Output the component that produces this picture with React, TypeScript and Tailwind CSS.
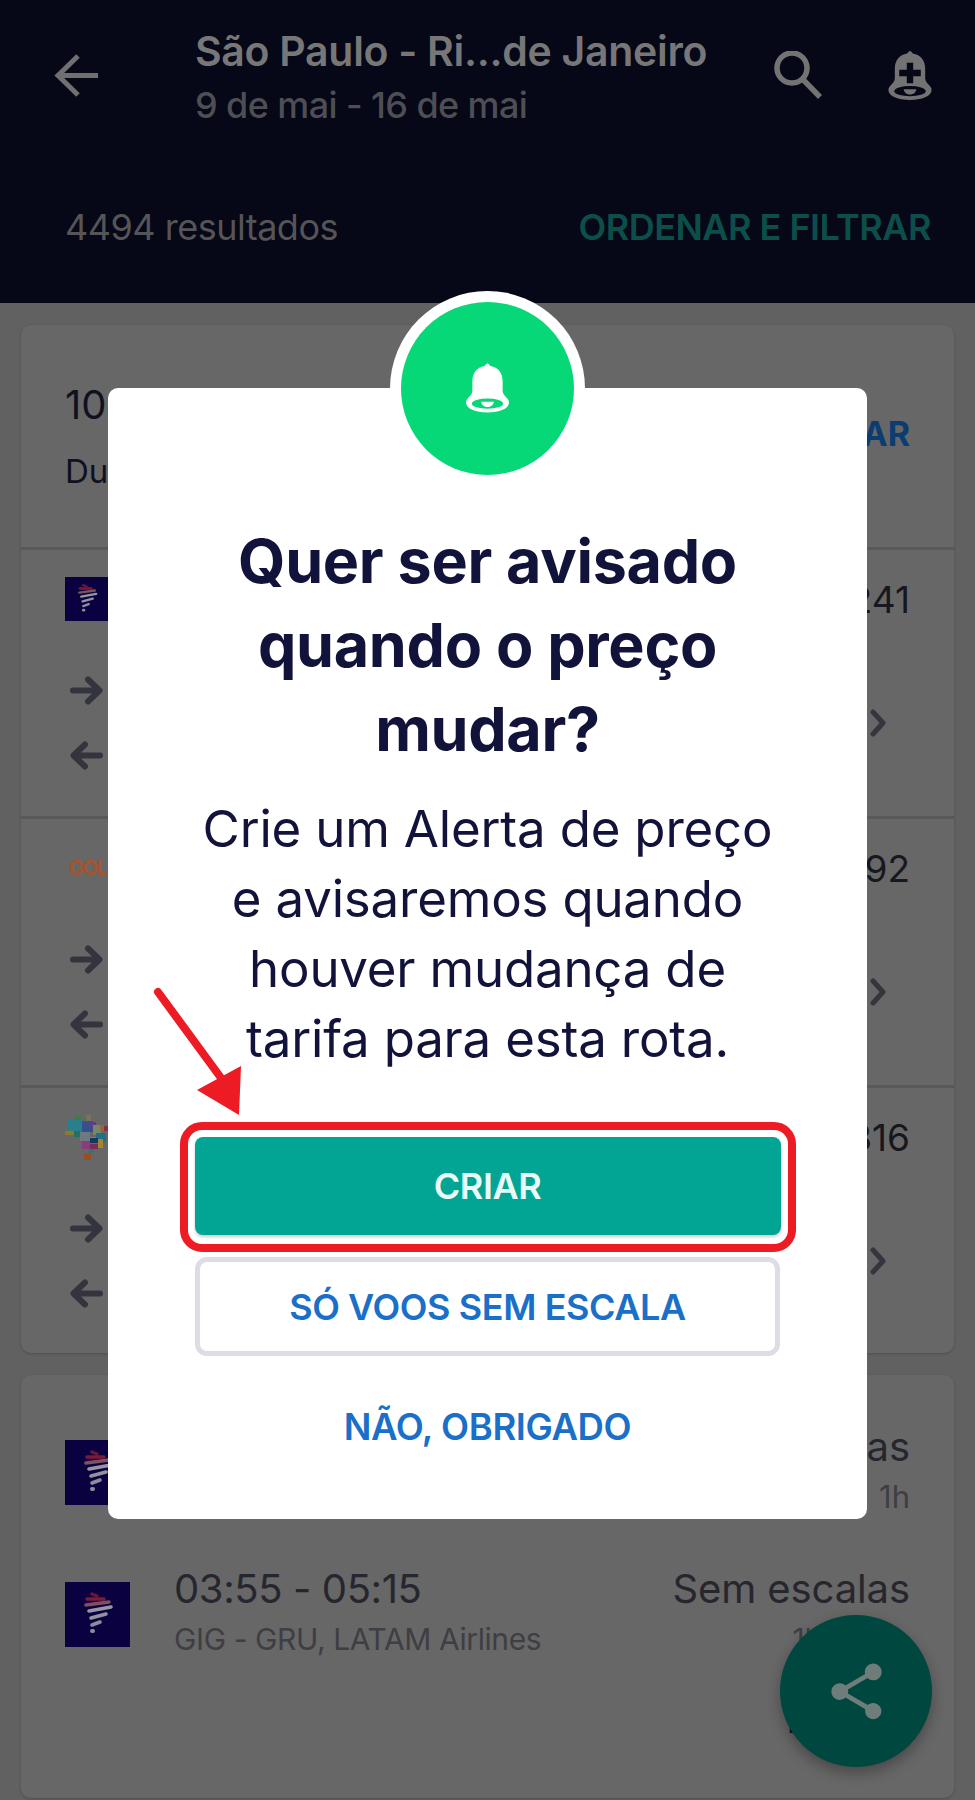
function Latam({ className }: { className: string }) {
  return (
    <svg viewBox="0 0 65 65" className={className}>
      <rect width="65" height="65" fill="#0a0240" />
      <g fill="none" strokeLinecap="round">
        <path d="M27 12 L32 14" stroke="#6e1530" strokeWidth="3.5" />
        <path d="M22 17 L39 17" stroke="#7c1a38" strokeWidth="3.5" />
        <path d="M21 23 L44 20" stroke="#80505f" strokeWidth="3.5" />
        <path d="M24 29 L46 25" stroke="#9a95a2" strokeWidth="3.5" />
        <path d="M26 36 L41 32" stroke="#96919f" strokeWidth="3.5" />
        <path d="M27 43 L35 40" stroke="#8f8b9b" strokeWidth="3.5" />
        <path d="M27 49 L28 49" stroke="#8d8a9c" strokeWidth="4" />
      </g>
    </svg>
  );
}

function Brazil() {
  const cells: [number, number, number, number, string][] = [
    [25, 16, 6, 6, "#3d7d43"],
    [36, 15, 5, 7, "#77745a"],
    [18, 20, 14, 11, "#2a7f8c"],
    [32, 21, 11, 11, "#34508e"],
    [40, 22, 6, 6, "#5c3f86"],
    [43, 25, 8, 10, "#7d8468"],
    [50, 25, 5, 6, "#8f6b3c"],
    [54, 26, 5, 5, "#8b2c4a"],
    [15, 31, 9, 4, "#8a7a2a"],
    [24, 31, 6, 6, "#256f68"],
    [30, 32, 10, 9, "#6f7a80"],
    [46, 33, 10, 9, "#1f6f88"],
    [40, 37, 6, 6, "#72808a"],
    [40, 38, 8, 5, "#10395a"],
    [48, 39, 5, 9, "#a3842f"],
    [32, 41, 8, 8, "#8a3b7e"],
    [40, 44, 8, 5, "#7d2b54"],
    [38, 49, 6, 4, "#3c6f78"],
    [34, 53, 7, 7, "#9a4f22"],
  ];
  return (
    <svg viewBox="15 15 44 45" className="w-[44px] h-[45px]">
      {cells.map(([x, y, w, h, c], i) => (
        <rect key={i} x={x} y={y} width={w} height={h} fill={c} />
      ))}
    </svg>
  );
}

function TripArrows() {
  return (
    <div className="mt-[55px] ml-[5px] flex flex-col gap-[36px]">
      <svg viewBox="0 0 33 29" className="w-[33px] h-[29px]" fill="none" stroke="#34343e" strokeWidth="6" strokeLinecap="round" strokeLinejoin="round">
        <path d="M3 14.5 H29 M18 3.5 L29.5 14.5 L18 25.5" />
      </svg>
      <svg viewBox="0 0 33 29" className="w-[33px] h-[29px]" fill="none" stroke="#34343e" strokeWidth="6" strokeLinecap="round" strokeLinejoin="round">
        <path d="M30 14.5 H4 M15 3.5 L3.5 14.5 L15 25.5" />
      </svg>
    </div>
  );
}

function Row({ logo, price, height }: { logo: React.ReactNode; price: string; height: string }) {
  return (
    <div className={`${height} border-t-[3px] border-[#595959] flex justify-between px-[44px]`}>
      <div className="pt-[27px] flex flex-col">
        <div className="h-[44px] w-[44px]">{logo}</div>
        <TripArrows />
      </div>
      <div className="pt-[30px] flex flex-col items-end">
        <div className="text-[37px] leading-[40px] text-[#17171f]">{price}</div>
        <svg viewBox="0 0 16 28" className="w-[16px] h-[28px] mt-[89px] mr-[24px]" fill="none" stroke="#35353e" strokeWidth="5" strokeLinecap="round" strokeLinejoin="round">
          <path d="M3 3 L13 14 L3 25" />
        </svg>
      </div>
    </div>
  );
}

function Bell({ color, inner, plus }: { color: string; inner: string; plus?: boolean }) {
  return (
    <svg viewBox="0 0 44 50" className="w-full h-full" fill={color}>
      <path d="M22 0 C20.6 0 20 1.6 19 2.6 C11 4 6.5 10 6.5 18 L6.5 28 C6.5 31 4 33 1.5 36 C0.5 37.2 0 38.5 0 40 C0 46 10 50 22 50 C34 50 44 46 44 40 C44 38.5 43.5 37.2 42.5 36 C40 33 37.5 31 37.5 28 L37.5 18 C37.5 10 33 4 25 2.6 C24 1.6 23.4 0 22 0 Z" />
      <ellipse cx="22" cy="41" rx="16" ry="5.2" fill={inner} />
      <path d="M15.5 39 H28.5 C28 42.5 25 44.5 22 44.5 C19 44.5 16 42.5 15.5 39 Z" />
      {plus && <path d="M22 12 V33 M11 22.5 H33" stroke={inner} strokeWidth="6.5" fill="none" />}
    </svg>
  );
}

export default function App() {
  return (
    <div className="relative w-[975px] h-[1800px] overflow-hidden bg-[#616162] font-[Inter,sans-serif]">
      <header className="h-[303px] bg-[#060717] pt-[28px]">
        <div className="flex items-start">
          <svg viewBox="0 0 44 43" className="w-[44px] h-[43px] ml-[54px] mt-[26px]" fill="none" stroke="#707070" strokeWidth="5">
            <path d="M44 21.5 H4 M24 2 L4 21.5 L24 41" />
          </svg>
          <div className="ml-[97px] whitespace-nowrap">
            <div className="text-[41px] leading-[46px] font-semibold text-[#777777] tracking-[-0.3px]">São Paulo - Ri...de Janeiro</div>
            <div className="text-[36px] leading-[44px] mt-[9px] font-medium text-[#4e4e55] tracking-[-0.6px]">9 de mai - 16 de mai</div>
          </div>
          <div className="ml-auto mr-[43px] mt-[23px] flex gap-[66px]">
            <svg viewBox="0 0 48 48" className="w-[48px] h-[48px]" fill="none" stroke="#737373" strokeWidth="5.5">
              <circle cx="18" cy="17" r="15" />
              <path d="M28.5 28 L46 46" />
            </svg>
            <div className="w-[44px] h-[49px]">
              <Bell color="#737373" inner="#060717" plus />
            </div>
          </div>
        </div>
        <div className="mt-[78px] pl-[65px] pr-[44px] flex justify-between items-center h-[44px]">
          <span className="text-[36px] text-[#555558] tracking-[-0.5px]">4494 resultados</span>
          <span className="text-[36px] font-semibold text-[#0c4f4a] tracking-[-0.5px]">ORDENAR E FILTRAR</span>
        </div>
      </header>

      <main className="px-[21px] pt-[22px] flex flex-col gap-[22px]">
        <section className="h-[1028px] rounded-[10px] bg-[#676767] shadow-[0_1px_3px_rgba(0,0,0,0.2)]">
          <div className="h-[222px] px-[44px] flex justify-between items-start pt-[56px]">
            <div>
              <div className="text-[40px] leading-[48px] text-[#10111f]">10 voos</div>
              <div className="text-[33px] leading-[44px] mt-[20px] text-[#10111f]">Duração</div>
            </div>
            <div className="text-[34px] leading-[44px] mt-[31px] font-bold text-[#0c3c70]">ALTERAR</div>
          </div>
          <Row height="h-[269px]" price="R$ 241" logo={<Latam className="w-[44px] h-[44px]" />} />
          <Row height="h-[269px]" price="R$ 292" logo={
            <div className="h-[44px] flex items-center pl-[4px] text-[20px] font-bold tracking-[-1.5px] text-[#a0562e]">GOL</div>
          } />
          <Row height="h-[268px]" price="R$ 316" logo={<Brazil />} />
        </section>

        <section className="h-[423px] rounded-[10px] bg-[#676767] shadow-[0_1px_3px_rgba(0,0,0,0.2)] px-[44px] pt-[65px]">
          <div className="flex justify-between">
            <Latam className="w-[65px] h-[65px]" />
            <div className="text-right">
              <div className="text-[40px] leading-[44px] -mt-[15px] text-[#26262e] tracking-[-0.1px]">Sem escalas</div>
              <div className="text-[31px] leading-[40px] mt-[8px] text-[#3e3e44]">1h</div>
            </div>
          </div>
          <div className="flex mt-[65px]">
            <Latam className="w-[65px] h-[65px] shrink-0" />
            <div className="ml-[44px] -mt-[15px]">
              <div className="text-[40px] leading-[44px] text-[#26262e] tracking-[-0.4px] whitespace-nowrap">03:55 - 05:15</div>
              <div className="text-[30px] leading-[40px] mt-[8px] text-[#3e3e44] tracking-[-0.4px] whitespace-nowrap">GIG - GRU, LATAM Airlines</div>
            </div>
            <div className="ml-auto -mt-[15px] text-right flex flex-col items-end whitespace-nowrap">
              <div className="text-[40px] leading-[44px] text-[#26262e] tracking-[-0.1px]">Sem escalas</div>
              <div className="text-[30px] leading-[40px] mt-[8px] mr-[42px] text-[#3e3e44]">1h 20</div>
              <div className="text-[38px] leading-[44px] mt-[38px] font-bold text-[#10111f]">R$ 241</div>
            </div>
          </div>
        </section>
      </main>

      <button className="absolute left-[780px] top-[1615px] w-[152px] h-[152px] rounded-full bg-[#00473f] shadow-[0_6px_14px_rgba(0,0,0,0.3)] flex items-center justify-center">
        <svg viewBox="0 0 24 24" className="w-[67px] h-[67px]" fill="#6f7d7a">
          <path d="M18 16.08c-.76 0-1.44.3-1.96.77L8.91 12.7c.05-.23.09-.46.09-.7s-.04-.47-.09-.7l7.05-4.11c.54.5 1.25.81 2.04.81 1.66 0 3-1.34 3-3s-1.34-3-3-3-3 1.34-3 3c0 .24.04.47.09.7L8.04 9.81C7.5 9.31 6.79 9 6 9c-1.66 0-3 1.34-3 3s1.34 3 3 3c.79 0 1.5-.31 2.04-.81l7.12 4.16c-.05.21-.08.43-.08.65 0 1.61 1.31 2.92 2.92 2.92 1.61 0 2.92-1.31 2.92-2.92s-1.31-2.92-2.92-2.92z" />
        </svg>
      </button>

      <div className="absolute left-[108px] top-[388px] w-[759px] h-[1131px] bg-white rounded-[10px] flex flex-col items-center pt-[131px]">
        <div className="absolute left-[282px] -top-[97px] w-[195px] h-[195px] rounded-full bg-white flex items-center justify-center">
          <div className="w-[173px] h-[173px] rounded-full bg-[#06d877] flex items-center justify-center">
            <div className="w-[43px] h-[50px] -mt-[2px]">
              <Bell color="#ffffff" inner="#06d877" />
            </div>
          </div>
        </div>

        <h1 className="w-[640px] text-center text-[61px] leading-[84px] font-bold text-[#12133a] tracking-[-0.3px]">
          Quer ser avisado
          <br />
          quando o preço
          <br />
          mudar?
        </h1>
        <p className="mt-[23px] w-[680px] text-center text-[51px] leading-[70px] text-[#12133a] tracking-[-0.2px]">
          Crie um Alerta de preço
          <br />
          e avisaremos quando
          <br />
          houver mudança de
          <br />
          tarifa para esta rota.
        </p>

        <div className="mt-[48px] w-[616px] h-[130px] rounded-[22px] border-[8px] border-[#ed1c24] pt-[7px] px-[7px]">
          <button className="w-full h-[98px] rounded-[8px] bg-[#02a593] shadow-[0_2px_3px_rgba(0,0,0,0.2)] text-[36px] font-semibold text-[#eafbf7] tracking-[-0.4px]">CRIAR</button>
        </div>
        <button className="mt-[5px] w-[585px] h-[99px] rounded-[12px] border-[5px] border-[#dcdde6] text-[36px] font-semibold text-[#1a6fc9] tracking-[-0.4px]">SÓ VOOS SEM ESCALA</button>
        <div className="mt-[51px] text-[36.5px] leading-[40px] font-semibold text-[#1a6fc9] tracking-[-0.4px]">NÃO, OBRIGADO</div>
      </div>

      <svg className="absolute left-[150px] top-[980px] w-[100px] h-[140px]" viewBox="150 980 100 140">
        <path d="M158 992 L224 1082" stroke="#ed1c24" strokeWidth="8" strokeLinecap="round" fill="none" />
        <path d="M241 1066 L197 1090 L239 1115 Z" fill="#ed1c24" />
      </svg>
    </div>
  );
}
